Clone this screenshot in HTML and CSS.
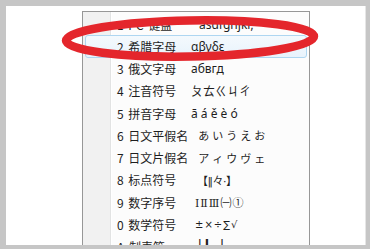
FILE: index.html
```html
<!DOCTYPE html>
<html lang="zh-CN">
<head>
    <meta charset="UTF-8">
    <title>软键盘菜单</title>
    <link rel="stylesheet" href="styles.css">
</head>
<body>
    <div class="panel">
        <div class="menu">
            <div class="item"><span class="label">1 PC 键盘</span><span class="sample pc">asdfghjkl;</span></div>
            <div class="item active"><span class="label">2 希腊字母</span><span class="sample">αβγδε</span></div>
            <div class="item"><span class="label">3 俄文字母</span><span class="sample">абвгд</span></div>
            <div class="item"><span class="label">4 注音符号</span><span class="sample">ㄆㄊㄍㄐㄔ</span></div>
            <div class="item"><span class="label">5 拼音字母</span><span class="sample">ā á ě è ó</span></div>
            <div class="item"><span class="label">6 日文平假名</span><span class="sample jp">あいうえお</span></div>
            <div class="item"><span class="label">7 日文片假名</span><span class="sample jp">アィウヴェ</span></div>
            <div class="item"><span class="label">8 标点符号</span><span class="sample punct">【‖々·】</span></div>
            <div class="item"><span class="label">9 数字序号</span><span class="sample num">ⅠⅡⅢ㈠①</span></div>
            <div class="item"><span class="label">0 数学符号</span><span class="sample math">±×÷∑√</span></div>
            <div class="item"><span class="label">A 制表符</span><span class="sample box">━┼┗━┼</span></div>
        </div>

        <!-- 红圈标注 -->
        <svg class="mark" width="370" height="80" viewBox="0 0 370 80">
            <ellipse cx="190" cy="32.5" rx="124" ry="18" transform="rotate(-1 190 32.5)"
                     fill="none" stroke="#e4262c" stroke-width="8.5"/>
        </svg>
    </div>
</body>
</html>
```

FILE: styles.css
```css
body {
    margin: 0;
    padding: 6px 4px 4px 6px;
    height: 249px;
    box-sizing: border-box;
    background: #c6c6c6;
    font-family: "Noto Sans", "Noto Sans CJK SC", sans-serif;
    font-size: 12px;
    color: #1e1e1e;
    overflow: hidden;
}
.panel {
    position: relative;
    background: #fff;
    height: 239px;
    overflow: hidden;
    border-right: 1px solid #e6e6e6;
}
.menu {
    width: 226px;
    margin: 5px 0 0 76px;
    padding-top: 1px;
    border: 1px solid #979797;
    background: linear-gradient(to right, #f1f1f1 27px, #e2e3e3 27px, #e2e3e3 28px, #fff 28px, #fff 29px, #fcfcfc 29px);
}
.item {
    display: flex;
    align-items: center;
    height: 22.25px;
    margin: 0 2px;
    padding-left: 31px;
    border: 1px solid transparent;
    border-radius: 3px;
    box-sizing: border-box;
    white-space: nowrap;
}
.item.active {
    border-color: #aed6f1;
    background: linear-gradient(#f4f9fd, #e8f3fc);
}
.label {
    min-width: 66px;
    margin-right: 8px;
    word-spacing: 2px;
    font-family: "Noto Sans CJK SC", sans-serif;
}
.sample {
    font-family: "Noto Sans", "Noto Sans CJK SC", sans-serif;
}
.sample.pc {
    margin-left: 8px;
}
.sample.jp {
    font-family: "Noto Sans CJK JP", sans-serif;
    font-size: 11px;
    letter-spacing: 3px;
    margin-left: 2px;
}
.sample.punct {
    font-family: "DejaVu Sans", "Noto Sans CJK SC", sans-serif;
    font-size: 11px;
    letter-spacing: -0.5px;
    margin-left: 6px;
}
.sample.num {
    font-family: "DejaVu Serif", "Noto Sans CJK SC", serif;
    font-size: 11px;
    letter-spacing: 1px;
    margin-left: 4px;
}
.sample.math {
    font-family: "DejaVu Sans", sans-serif;
    font-size: 10px;
    letter-spacing: 1px;
    margin-left: 4px;
}
.sample.box {
    font-family: "DejaVu Sans Mono", monospace;
    font-size: 14px;
    font-weight: bold;
    letter-spacing: -1px;
    margin-left: -3px;
}
.mark {
    position: absolute;
    left: -6px;
    top: 0;
}
```
